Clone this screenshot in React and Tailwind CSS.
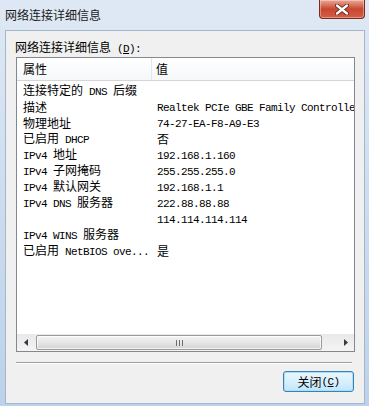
import React from "react";

const rows = [
  ["连接特定的 DNS 后缀", ""],
  ["描述", "Realtek PCIe GBE Family Controller"],
  ["物理地址", "74-27-EA-F8-A9-E3"],
  ["已启用 DHCP", "否"],
  ["IPv4 地址", "192.168.1.160"],
  ["IPv4 子网掩码", "255.255.255.0"],
  ["IPv4 默认网关", "192.168.1.1"],
  ["IPv4 DNS 服务器", "222.88.88.88"],
  ["", "114.114.114.114"],
  ["IPv4 WINS 服务器", ""],
  ["已启用 NetBIOS ove...", "是"],
];

// split text so CJK uses a CJK face and latin a 6px-wide mono face (like SimSun)
function Txt({ s }) {
  return s
    .split(/([\u3000-\u9fff\uff00-\uffef]+)/)
    .filter(Boolean)
    .map((p, i) =>
      /[\u3000-\u9fff\uff00-\uffef]/.test(p) ? (
        <span key={i} className="font-['Noto_Sans_CJK_SC',sans-serif] text-[12px]">
          {p}
        </span>
      ) : (
        <span key={i} className="font-['Liberation_Mono',monospace] text-[11px] tracking-[-0.6px] whitespace-pre">
          {p}
        </span>
      )
    );
}

export default function App() {
  return (
    <div className="w-[369px] h-[406px] flex flex-col bg-gradient-to-b from-[#dfe9f5] via-[#cddcee] to-[#bcd2ea] text-black">
      {/* title bar */}
      <div className="h-[30px] flex items-start justify-between">
        <div className="ml-[5px] mt-[7px] leading-[16px] text-[12px] font-['Noto_Sans_CJK_SC',sans-serif] text-[#1a1a1a]">
          网络连接详细信息
        </div>
        <div className="mr-[4px] w-[46px] h-[19px] rounded-b-[4px] border border-t-0 border-[#7b2a1e] bg-gradient-to-b from-[#e9a796] via-[#c9462e] to-[#d35e45] flex items-center justify-center shadow-[inset_0_0_0_1px_rgba(255,255,255,0.35)]">
          <svg width="14" height="11" viewBox="0 0 14 11">
            <path d="M2 1.5 L12 9.5 M12 1.5 L2 9.5" stroke="#5a1a10" strokeWidth="4" strokeLinecap="round" />
            <path d="M2 1.5 L12 9.5 M12 1.5 L2 9.5" stroke="#ffffff" strokeWidth="2.4" strokeLinecap="round" />
          </svg>
        </div>
      </div>

      {/* client area */}
      <div className="ml-[5px] mr-[4px] mb-[2px] flex-1 flex flex-col bg-[#f0f0f0] border border-[#a3b6cb]">
        <div className="ml-[9px] mt-[8px] leading-[14px] h-[14px]">
          <Txt s="网络连接详细信息 " />
          <span className="font-['Liberation_Mono',monospace] text-[11px] tracking-[-0.6px]">
            (<span className="underline">D</span>):
          </span>
        </div>

        {/* list view */}
        <div className="ml-[10px] mt-[4px] w-[339px] h-[295px] border border-[#828790] bg-white flex flex-col">
          <div className="h-[23px] flex border-b border-[#d5d5d5] bg-gradient-to-b from-white to-[#f6f7f9]">
            <div className="w-[135px] pl-[6px] flex items-center border-r border-[#e3e8ee] leading-[16px]">
              <Txt s="属性" />
            </div>
            <div className="flex-1 pl-[4px] flex items-center leading-[16px]">
              <Txt s="值" />
            </div>
          </div>
          <div className="mt-[1px] flex flex-col">
            {rows.map(([k, v], i) => (
              <div key={i} className="h-[16px] flex items-center leading-[16px] whitespace-nowrap">
                <div className="w-[135px] pl-[6px] overflow-hidden">
                  <Txt s={k} />
                </div>
                <div className="flex-1 pl-[5px] overflow-hidden">
                  <Txt s={v} />
                </div>
              </div>
            ))}
          </div>
          <div className="flex-1" />
          {/* horizontal scrollbar */}
          <div className="h-[17px] flex bg-gradient-to-b from-[#e9e9e9] to-[#f4f4f4]">
            <div className="w-[17px] flex items-center justify-center">
              <svg width="4" height="7" viewBox="0 0 4 7">
                <path d="M4 0 L0 3.5 L4 7 Z" fill="#3a3a3a" />
              </svg>
            </div>
            <div className="flex-1 flex pl-[2px] pr-[15px] py-[1px]">
              <div className="flex-1 rounded-[2px] border border-[#9a9a9a] bg-gradient-to-b from-[#f4f4f4] via-[#e6e6e6] to-[#d4d4d4] flex items-center justify-center gap-[2px] shadow-[inset_0_0_0_1px_rgba(255,255,255,0.7)]">
                <div className="w-[1px] h-[6px] bg-[#6f6f6f]" />
                <div className="w-[1px] h-[6px] bg-[#6f6f6f]" />
                <div className="w-[1px] h-[6px] bg-[#6f6f6f]" />
              </div>
            </div>
            <div className="w-[17px] flex items-center justify-center">
              <svg width="4" height="7" viewBox="0 0 4 7">
                <path d="M0 0 L4 3.5 L0 7 Z" fill="#3a3a3a" />
              </svg>
            </div>
          </div>
        </div>

        {/* separator */}
        <div className="ml-[10px] mt-[10px] w-[336px] h-[2px] border-t border-[#a0a0a0] border-b border-b-white" />

        {/* close button */}
        <div className="mt-[7px] mr-[10px] flex justify-end">
          <div className="w-[71px] h-[21px] rounded-[3px] border border-[#3c7fb1] bg-gradient-to-b from-[#eaf6fd] via-[#d9f0fc] to-[#bee6fd] flex items-center justify-center shadow-[inset_0_0_0_1px_#a8e0fb] leading-[14px]">
            <Txt s="关闭" />
            <span className="font-['Liberation_Mono',monospace] text-[11px] tracking-[-0.6px]">
              (<span className="underline">C</span>)
            </span>
          </div>
        </div>
      </div>
    </div>
  );
}
